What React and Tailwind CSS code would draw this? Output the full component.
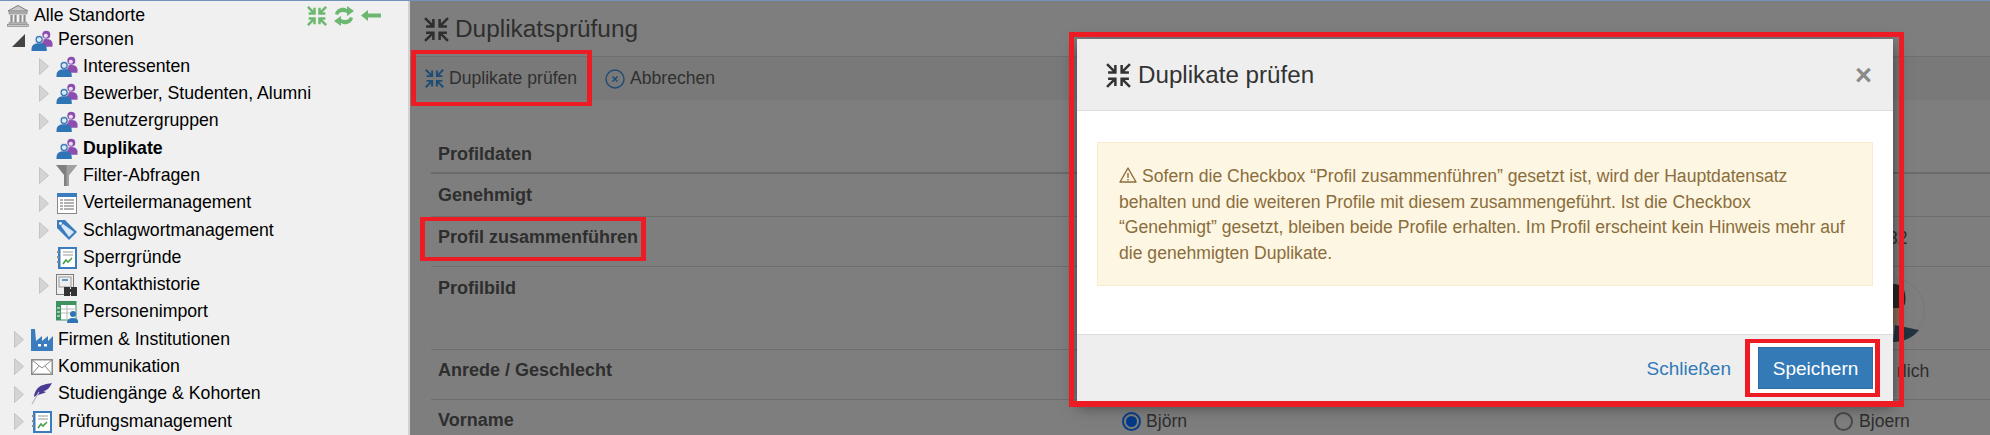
import React from "react";

const Compress = ({ className, sw = 2.400 }) => (
  <svg viewBox="0 0 24 24" className={className} fill="none" stroke="currentColor" strokeWidth={sw} strokeLinecap="butt">
    <path d="M1 1 8 8M9 2V9H2" />
    <path d="M23 1 16 8M15 2V9H22" />
    <path d="M1 23 8 16M9 22V15H2" />
    <path d="M23 23 16 16M15 22V15H22" />
  </svg>
);

const Caret = ({ open }) =>
  open ? (
    <svg viewBox="0 0 13 13" className="w-[13px] h-[13px]">
      <path d="M13 0V13H0Z" fill="#444" />
    </svg>
  ) : (
    <svg viewBox="0 0 10 17" className="w-[10px] h-[17px]">
      <path d="M.5.5 9.500 8.500.5 16.500Z" fill="#d4d4d4" stroke="#c4c4c4" />
    </svg>
  );

const Bank = () => (
  <svg viewBox="0 0 22 22" className="w-[22px] h-[22px]">
    <path d="M11 .5 21 6H1Z" fill="#c9c9c9" stroke="#7d7d7d" />
    <rect x="2" y="7" width="18" height="2" fill="#bbb" stroke="#7d7d7d" strokeWidth=".6" />
    <path d="M4.500 10v7M8.500 10v7M13.500 10v7M17.500 10v7" stroke="#8d8d8d" strokeWidth="2.200" />
    <rect x="2" y="17.500" width="18" height="1.600" fill="#bbb" stroke="#7d7d7d" strokeWidth=".5" />
    <rect x=".5" y="19.600" width="21" height="2" fill="#c9c9c9" stroke="#7d7d7d" strokeWidth=".6" />
  </svg>
);

const People = () => (
  <svg viewBox="0 0 22 22" className="w-[22px] h-[21px]">
    <circle cx="15.500" cy="5" r="4.200" fill="#8c4fb0" />
    <path d="M9 14q.5-4.500 6.500-4.500t6.500 4.500v3.500H9Z" fill="#8c4fb0" />
    <circle cx="15" cy="6" r="2.200" fill="#e9dff0" />
    <circle cx="8" cy="10" r="4.200" fill="#2f74b5" stroke="#f0f0f0" strokeWidth=".8" />
    <circle cx="8" cy="10" r="2.500" fill="#dbe8f4" />
    <path d="M0 20q0-6 8-6t8 6v2H0Z" fill="#2f74b5" />
  </svg>
);

const Funnel = () => (
  <svg viewBox="0 0 22 22" className="w-[22px] h-[22px]">
    <path d="M0 0H21L13 10V21H8V10Z" fill="#7f7f7f" />
    <path d="M10.500 0H21L13 10V21H10.500Z" fill="#a0a0a0" />
  </svg>
);

const ListDoc = () => (
  <svg viewBox="0 0 20 21" className="w-[20px] h-[21px] ml-[1px]">
    <rect x=".5" y=".5" width="19" height="20" fill="#fff" stroke="#888" />
    <rect x="0" y="0" width="20" height="4" fill="#3a7cbd" />
    <path d="M3 7h3M7 7h10M3 10h3M7 10h10M3 13h3M7 13h10M3 16h3M7 16h10" stroke="#666" />
  </svg>
);

const Tag = () => (
  <svg viewBox="0 0 22 22" className="w-[22px] h-[22px]">
    <path d="M1 1H9L21 13 13 21 1 9Z" fill="#3a7cbd" />
    <path d="M5 7 7 5 18 13 13 18Z" fill="#dce8f3" />
    <circle cx="4.500" cy="4.500" r="1.400" fill="#fff" />
  </svg>
);

const Notebook = () => (
  <svg viewBox="0 0 20 22" className="w-[20px] h-[22px] ml-[1px]">
    <rect x="1" y="0" width="19" height="22" fill="#3a7cbd" />
    <rect x="3.500" y="2" width="14.500" height="18" fill="#fff" />
    <path d="M1 4v2M1 9v2M1 14v2" stroke="#888" strokeWidth="2" />
    <path d="M6 5h10M6 8h10" stroke="#999" />
    <path d="M6 17 9 13 11 15 15 11" stroke="#4aa04a" strokeWidth="1.600" fill="none" />
  </svg>
);

const Binoculars = () => (
  <svg viewBox="0 0 22 22" className="w-[22px] h-[22px]">
    <rect x=".5" y=".5" width="17" height="20" fill="#eee" stroke="#7d7d7d" />
    <rect x="3" y="3" width="12" height="10" fill="none" stroke="#999" />
    <rect x="6" y="5" width="6" height="2" fill="#5f95c9" />
    <rect x="8" y="13" width="6" height="9" fill="#333" />
    <rect x="15" y="13" width="6" height="9" fill="#333" />
    <rect x="13" y="15" width="3" height="3" fill="#333" />
  </svg>
);

const Sheet = () => (
  <svg viewBox="0 0 22 22" className="w-[22px] h-[22px]">
    <rect x="0" y="0" width="20" height="19" fill="#fff" stroke="#3f9160" />
    <rect x="0" y="0" width="20" height="4" fill="#3f9160" />
    <rect x="0" y="0" width="5" height="19" fill="#3f9160" />
    <path d="M1 7h3M1 11h3M1 15h3" stroke="#fff" />
    <path d="M5 8h15M5 12h9M11 4v14" stroke="#b9b9b9" />
    <circle cx="17" cy="13" r="3" fill="#2f74b5" />
    <path d="M11 22q0-5 6-5t5 5Z" fill="#2f74b5" />
  </svg>
);

const Factory = () => (
  <svg viewBox="0 0 22 22" className="w-[22px] h-[22px]">
    <path d="M0 0H4L5 12 11 7V12L17 7V12L22 7V22H0Z" fill="#3a7cbd" />
    <rect x="7" y="15" width="3" height="2.500" fill="#fff" />
    <rect x="13" y="15" width="3" height="2.500" fill="#fff" />
  </svg>
);

const Envelope = () => (
  <svg viewBox="0 0 22 16" className="w-[22px] h-[16px]">
    <rect x=".75" y=".75" width="20.500" height="14.500" fill="#fff" stroke="#8a8a8a" strokeWidth="1.500" />
    <path d="M1 1 11 9 21 1M1 15 8 7M21 15 14 7" fill="none" stroke="#8a8a8a" />
  </svg>
);

const Quill = () => (
  <svg viewBox="0 0 22 22" className="w-[22px] h-[22px]">
    <path d="M21 0C15 1 9 2 6 6 4 9 3 11 3 14 7 11 12 11 15 9L12 8C15 8 18 6 21 0Z" fill="#4b3a91" />
    <path d="M8 9 1 21" stroke="#b9b9c9" strokeWidth="1.300" />
  </svg>
);

const tree = [
  { label: "Interessenten", level: 2, icon: People, caret: true },
  { label: "Bewerber, Studenten, Alumni", level: 2, icon: People, caret: true },
  { label: "Benutzergruppen", level: 2, icon: People, caret: true },
  { label: "Duplikate", level: 2, icon: People, bold: true },
  { label: "Filter-Abfragen", level: 2, icon: Funnel, caret: true },
  { label: "Verteilermanagement", level: 2, icon: ListDoc, caret: true },
  { label: "Schlagwortmanagement", level: 2, icon: Tag, caret: true },
  { label: "Sperrgründe", level: 2, icon: Notebook },
  { label: "Kontakthistorie", level: 2, icon: Binoculars, caret: true },
  { label: "Personenimport", level: 2, icon: Sheet },
  { label: "Firmen & Institutionen", level: 1, icon: Factory, caret: true },
  { label: "Kommunikation", level: 1, icon: Envelope, caret: true },
  { label: "Studiengänge & Kohorten", level: 1, icon: Quill, caret: true },
  { label: "Prüfungsmanagement", level: 1, icon: Notebook, caret: true },
];

const TreeRow = ({ item }) => {
  const Icon = item.icon;
  return (
    <div className={`flex items-center h-[27.3px] shrink-0 ${item.level === 2 ? "pl-[39px]" : "pl-[14px]"}`}>
      <span className="w-[17px] flex items-center">{item.caret && <Caret />}</span>
      <span className="w-[27px] flex items-center">
        <Icon />
      </span>
      <span className={`whitespace-nowrap text-[17.7px] leading-none text-black ${item.bold ? "font-bold" : ""}`}>{item.label}</span>
    </div>
  );
};

const Sidebar = () => (
  <aside className="w-[410px] shrink-0 bg-[#f0f0f0] border-r-2 border-[#d2d2d2] flex flex-col overflow-hidden">
    <div className="flex items-center h-[26px] pl-[7px] pt-[3px] shrink-0">
      <span className="w-[27px] flex items-center">
        <Bank />
      </span>
      <span className="text-[17.7px] leading-none text-black whitespace-nowrap">Alle Standorte</span>
      <div className="ml-auto mr-[27px] flex items-center gap-[6px] text-[#6cb871]">
        <Compress className="w-[20px] h-[20px]" sw={3} />
        <svg viewBox="0 0 22 20" className="w-[22px] h-[20px]">
          <path d="M2 8C3 3 8 1 12 2L14 3V0L21 5 14 10V7C10 5 6 6 5 9Z" fill="#6cb871" />
          <path d="M20 12C19 17 14 19 10 18L8 17V20L1 15 8 10V13C12 15 16 14 17 11Z" fill="#6cb871" />
        </svg>
        <svg viewBox="0 0 20 11" className="w-[20px] h-[11px]">
          <path d="M0 5.500 7 0V3.500H20V7.500H7V11Z" fill="#6cb871" />
        </svg>
      </div>
    </div>
    <div className="flex items-center h-[26px] pl-[12px] shrink-0">
      <span className="w-[19px] flex items-center">
        <Caret open />
      </span>
      <span className="w-[27px] flex items-center">
        <People />
      </span>
      <span className="text-[17.7px] leading-none text-black whitespace-nowrap">Personen</span>
    </div>
    {tree.map((item) => (
      <TreeRow key={item.label} item={item} />
    ))}
  </aside>
);

const Row = ({ height, pad = "pt-[10px]", label, thick, col2, col3 }) => (
  <div className={`grid grid-cols-[691px_712px_1fr] shrink-0 ${pad} ${height} ${thick ? "border-b-2 border-[#6a6a6a]" : "border-b border-[#6e6e6e]"}`}>
    <div className="pl-[7px] text-[18px] leading-[20px] font-bold text-[#2e2e2e] whitespace-nowrap">{label}</div>
    <div className="text-[17.6px] leading-[22px] text-[#2e2e2e]">{col2}</div>
    <div className="text-[17.6px] leading-[22px] text-[#2e2e2e]">{col3}</div>
  </div>
);

const Main = () => (
  <main className="flex-1 bg-[#7e7e7e] flex flex-col overflow-hidden">
    <div className="h-[56px] border-b border-[#6f6f6f] flex items-center pl-[14px] pt-[1px] shrink-0 text-[#2e2e2e]">
      <Compress className="w-[25px] h-[25px] mr-[6px]" />
      <span className="text-[24.4px] leading-none">Duplikatsprüfung</span>
    </div>
    <div className="h-[43px] bg-[#797979] flex items-center pl-[15px] shrink-0 text-[#303030] text-[17.6px] leading-none">
      <Compress className="w-[19px] h-[19px] text-[#1f4c74] mr-[5px]" sw={2.500} />
      <span className="w-[156px] whitespace-nowrap">Duplikate prüfen</span>
      <svg viewBox="0 0 20 20" className="w-[20px] h-[20px] mr-[5px]" fill="none" stroke="#1f4c74" strokeWidth="1.400">
        <circle cx="10" cy="10" r="9" />
        <path d="M7.500 7.500 12.500 12.500M12.500 7.500 7.500 12.500" strokeWidth="1.600" />
      </svg>
      <span>Abbrechen</span>
    </div>
    <div className="pl-[21px] mt-[30px] flex flex-col">
      <Row height="h-[44px]" pad="pt-[14px]" thick label="Profildaten" />
      <Row height="h-[43px]" pad="pt-[11px]" label="Genehmigt" />
      <Row height="h-[50px]" label="Profil zusammenführen" col3={<span className="pl-[54px]">32</span>} />
      <Row
        height="h-[83px]"
        pad="pt-[11px]"
        label="Profilbild"
        col3={
          <div className="pl-[27px]">
            <svg viewBox="0 0 64 64" className="w-[64px] h-[64px]">
              <circle cx="32" cy="32" r="31.500" fill="#7e7e7e" stroke="#777" />
              <path d="M32 6C42 5 46 14 44 26L40 32H32Z" fill="#272727" />
              <path d="M25 30H40L38 44 32 50H25Z" fill="#8a6e5a" />
              <path d="M34 47 58 52C52 60 42 64 32 64Z" fill="#22343f" />
            </svg>
          </div>
        }
      />
      <Row height="h-[50px]" label="Anrede / Geschlecht" col3={<span className="pl-[63px]">rlich</span>} />
      <Row
        height="h-[50px]"
        label="Vorname"
        col2={
          <span className="flex items-center gap-[5px]">
            <span className="w-[19px] h-[19px] rounded-full border-2 border-[#0a3f86] flex items-center justify-center">
              <span className="w-[11px] h-[11px] rounded-full bg-[#003b87]" />
            </span>
            Björn
          </span>
        }
        col3={
          <span className="flex items-center gap-[6px]">
            <span className="w-[19px] h-[19px] rounded-full border-2 border-[#4a4a4a]" />
            Bjoern
          </span>
        }
      />
    </div>
  </main>
);

const Modal = () => (
  <div className="absolute left-[1077px] top-[39px] w-[816px] h-[362px] bg-white flex flex-col shadow-[0_5px_15px_rgba(0,0,0,0.5)]">
    <div className="h-[72px] shrink-0 bg-[#eeeeee] border-b border-[#dddddd] flex items-center pl-[29px] pr-[21px] pt-[1px] text-[#333333]">
      <Compress className="w-[25px] h-[25px] mr-[7px]" />
      <span className="text-[24.2px] leading-none">Duplikate prüfen</span>
      <span className="ml-auto text-[29px] leading-none font-bold text-[#8a8a8a]">×</span>
    </div>
    <div className="flex-1 px-[20px] pt-[31px]">
      <div className="h-[144px] bg-[#fdf6e3] border border-[#faebcc] px-[21px] pt-[21px] text-[17.6px] leading-[25.6px] text-[#8a6d3b]">
        <svg viewBox="0 0 18 16" className="inline-block w-[18px] h-[16px] mr-[5px] align-[-1px]" fill="none" stroke="#8a6d3b" strokeWidth="1.400" strokeLinejoin="round">
          <path d="M9 1 17 15H1Z" />
          <path d="M9 6v5M9 12v1.400" />
        </svg>
        Sofern die Checkbox “Profil zusammenführen” gesetzt ist, wird der Hauptdatensatz behalten und die weiteren Profile mit diesem zusammengeführt. Ist die Checkbox “Genehmigt” gesetzt, bleiben beide Profile erhalten. Im Profil erscheint kein Hinweis mehr auf die genehmigten Duplikate.
      </div>
    </div>
    <div className="relative h-[67px] shrink-0 bg-[#eeeeee] border-t border-[#dddddd] flex items-center justify-end pr-[20px] gap-[27px]">
      <span className="text-[19px] leading-none text-[#337ab7]">Schließen</span>
      <span className="absolute left-[668px] top-[4px] w-[135px] h-[58px] bg-white border-x-[5px] border-y-[4px] border-[#ed1c24]" />
      <button className="relative w-[115px] h-[42px] bg-[#337ab7] border border-[#2e6da4] text-white text-[19px] leading-none">Speichern</button>
    </div>
  </div>
);

export default function App() {
  return (
    <div className="relative w-[1990px] h-[435px] overflow-hidden font-['Liberation_Sans',Arial,sans-serif] flex flex-col">
      <div className="h-[1px] bg-[#6f94b9] shrink-0" />
      <div className="flex flex-1 min-h-0">
        <Sidebar />
        <Main />
      </div>
      <Modal />
      <div className="absolute left-[411px] top-[50px] w-[181px] h-[56px] border-x-[5px] border-y-4 border-[#ed1c24]" />
      <div className="absolute left-[420px] top-[217px] w-[226px] h-[44px] border-x-[5px] border-y-4 border-[#ed1c24]" />
      <div className="absolute left-[1069px] top-[32px] w-[835px] h-[375px] border-[5px] border-[#ed1c24] border-b-[6px]" />
    </div>
  );
}
